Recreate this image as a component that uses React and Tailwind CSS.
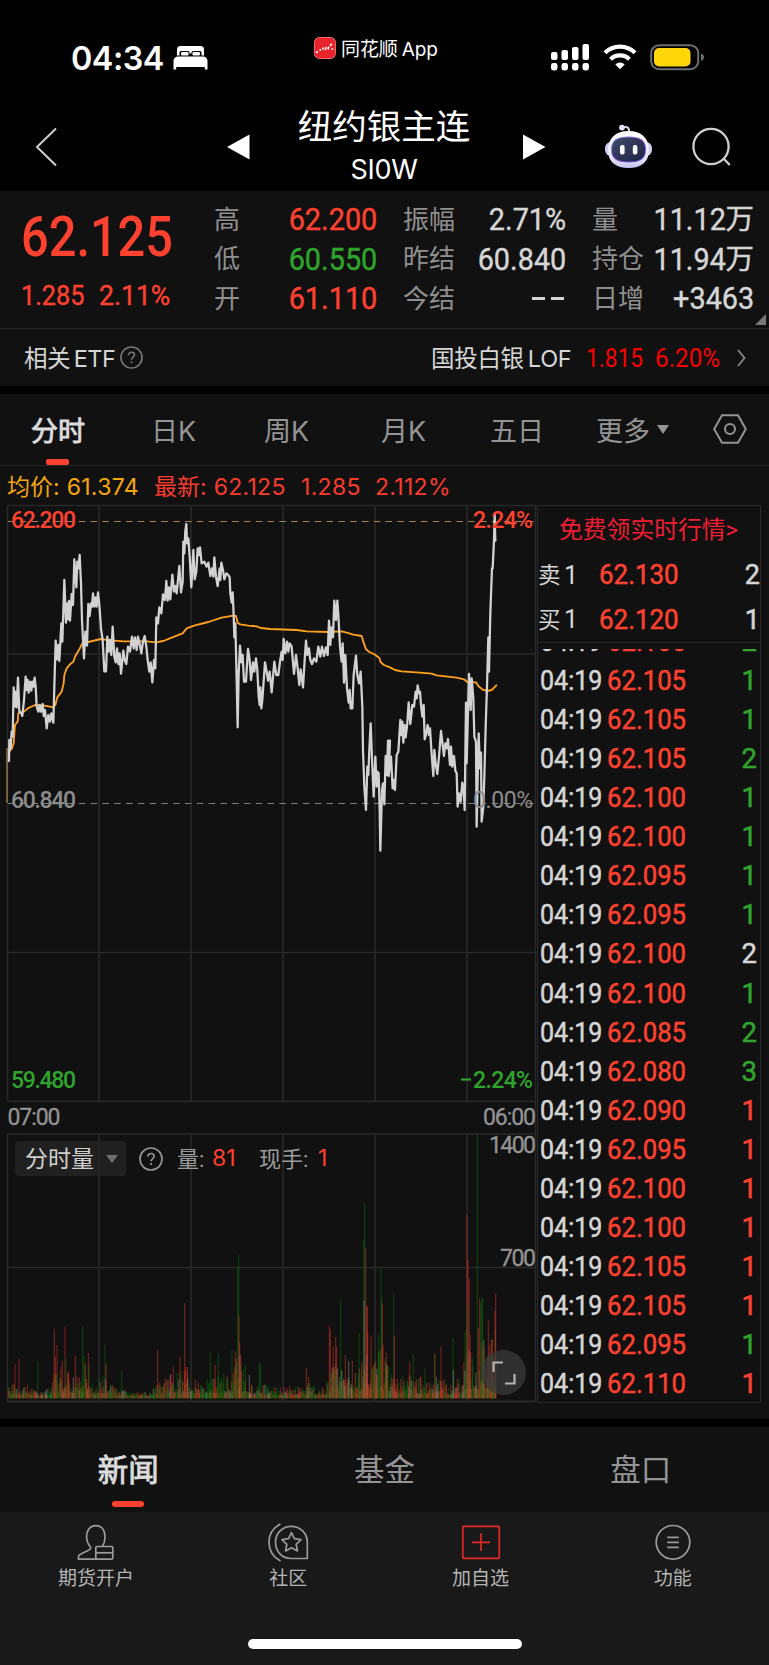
import React from "react";

/* ---------- data ---------- */

const QUOTE = [
  [
    ["高", "62.200", "text-[#ff4130]"],
    ["低", "60.550", "text-[#2fa52d]"],
    ["开", "61.110", "text-[#ff4130]"],
  ],
  [
    ["振幅", "2.71%", "text-[#d6d6d6]"],
    ["昨结", "60.840", "text-[#d6d6d6]"],
    ["今结", "--", "text-[#d6d6d6]"],
  ],
  [
    ["量", "11.12", "text-[#d6d6d6]", "万"],
    ["持仓", "11.94", "text-[#d6d6d6]", "万"],
    ["日增", "+3463", "text-[#d6d6d6]"],
  ],
];

const R = "text-[#ff4130]";
const G = "text-[#2fa52d]";
const W = "text-[#d6d6d6]";

const TICKS = [
  ["62.105", "2", G],
  ["62.105", "1", G],
  ["62.105", "1", G],
  ["62.105", "2", G],
  ["62.100", "1", G],
  ["62.100", "1", G],
  ["62.095", "1", G],
  ["62.095", "1", G],
  ["62.100", "2", W],
  ["62.100", "1", G],
  ["62.085", "2", G],
  ["62.080", "3", G],
  ["62.090", "1", R],
  ["62.095", "1", R],
  ["62.100", "1", R],
  ["62.100", "1", R],
  ["62.105", "1", R],
  ["62.105", "1", R],
  ["62.095", "1", G],
  ["62.110", "1", R],
];

const PRICE =
  "27,783 28,720 32,745 35,695 38,710 41,562 44,620 47,575 50,622 54,533 58,635 64,640 67,648 72,600 77,530 80,570 83,540 86,578 90,545 94,572 97,545 101,560 104,533 107,560 110,620 115,635 119,615 123,635 128,612 131,648 135,630 140,685 145,645 150,665 154,640 160,668 163,560 167,422 171,478 175,435 178,483 184,370 187,425 193,240 198,368 202,310 205,358 207,303 210,362 215,282 219,315 223,178 229,262 232,185 235,205 239,165 243,250 246,360 249,420 252,475 256,395 261,437 265,312 269,348 273,310 276,320 279,280 283,320 287,292 290,320 294,277 298,315 303,385 308,420 313,514 318,514 322,410 326,455 330,420 334,465 338,380 343,470 347,487 351,445 355,492 359,460 363,521 370,452 374,480 379,492 384,440 390,455 396,410 401,445 405,412 410,450 414,410 419,432 424,460 429,425 434,408 439,440 443,480 448,515 452,487 457,547 462,480 466,505 469,352 474,370 478,322 484,340 489,283 495,300 499,243 503,302 507,262 511,298 517,224 522,275 527,258 530,280 538,198 543,277 548,245 550,125 553,160 556,92 559,72 561,130 565,115 569,170 574,262 580,150 584,238 589,215 593,145 597,165 600,142 605,190 613,185 620,200 625,188 631,228 636,205 640,230 643,172 648,230 653,258 659,205 661,240 664,188 669,210 673,238 679,220 685,225 689,232 691,280 695,308 698,277 701,345 703,412 706,370 710,540 713,682 716,520 720,437 724,487 728,465 732,545 738,545 744,447 749,480 753,540 759,487 763,515 768,475 772,510 776,590 779,615 781,562 784,625 787,600 795,487 800,515 804,542 809,515 815,577 823,485 829,525 835,525 840,485 845,455 848,480 851,417 856,460 861,425 865,455 869,430 875,440 882,522 888,465 893,505 898,555 902,508 909,562 914,480 918,422 922,465 927,445 931,480 936,492 942,475 949,485 955,440 961,470 966,440 972,468 978,442 983,465 987,362 991,435 994,382 999,412 1003,302 1008,360 1012,302 1015,345 1020,440 1025,485 1028,430 1032,548 1036,465 1041,565 1046,608 1049,570 1052,625 1057,625 1061,525 1068,467 1072,525 1077,550 1082,515 1087,620 1089,750 1093,860 1098,930 1102,800 1105,825 1108,750 1112,670 1117,800 1121,890 1126,770 1130,860 1132,815 1136,820 1139,930 1141,1052 1146,870 1149,850 1153,913 1157,768 1161,825 1164,722 1170,722 1166,828 1173,770 1178,865 1181,840 1185,870 1190,765 1195,755 1201,660 1204,705 1207,665 1210,728 1214,675 1217,712 1222,670 1226,607 1231,672 1237,615 1242,620 1247,575 1250,595 1253,556 1257,580 1260,575 1263,615 1267,650 1271,615 1274,718 1278,705 1283,675 1287,705 1290,685 1295,762 1300,828 1303,750 1307,790 1312,822 1317,770 1323,693 1328,735 1332,768 1336,730 1340,745 1344,717 1350,795 1353,740 1357,800 1362,768 1366,812 1370,820 1373,920 1377,880 1382,905 1387,848 1391,870 1394,930 1398,608 1400,790 1407,522 1410,560 1412,630 1415,535 1420,595 1423,710 1428,725 1430,980 1436,700 1440,805 1443,758 1445,965 1450,920 1453,830 1457,680 1461,560 1465,412 1467,515 1471,340 1476,205 1478,205 1482,122 1484,44 1486,122";

const AVERAGE =
  "30,752 36,745 41,730 45,675 53,665 55,640 65,636 73,634 83,625 105,615 130,616 160,622 166,615 172,592 185,575 191,550 193,525 200,505 210,493 220,485 225,470 238,448 247,430 265,426 290,420 303,417 330,421 370,424 440,424 468,427 490,423 515,413 548,400 560,385 585,376 625,366 665,353 700,347 708,348 713,368 720,373 745,377 770,379 782,384 810,387 890,390 920,394 985,396 1025,394 1040,398 1060,404 1085,408 1090,425 1098,448 1108,456 1125,464 1138,474 1142,487 1152,495 1170,502 1185,510 1205,514 1260,518 1295,521 1310,526 1370,533 1392,538 1402,546 1428,547 1435,558 1448,569 1462,573 1475,570 1483,562 1489,556";

/* volume peaks: x, height, colour */
const PEAKS = [
  [45, 103, "r"], [57, 119, "r"], [114, 113, "g"], [163, 210, "r"], [166, 125, "r"], [171, 160, "r"],
  [187, 112, "r"], [195, 215, "r"], [198, 120, "g"], [205, 80, "r"], [226, 128, "r"], [248, 218, "g"],
  [252, 128, "g"], [265, 136, "r"], [268, 100, "g"], [315, 160, "g"], [318, 103, "r"], [365, 83, "g"],
  [473, 145, "r"], [520, 95, "r"], [540, 125, "r"], [554, 286, "r"], [557, 94, "r"], [562, 94, "r"],
  [631, 138, "g"], [645, 100, "r"], [655, 133, "g"], [696, 144, "g"], [706, 140, "r"], [713, 390, "g"],
  [716, 432, "g"], [717, 248, "r"], [719, 166, "r"], [722, 132, "r"], [736, 97, "g"], [748, 70, "w"],
  [778, 110, "g"], [782, 102, "g"], [919, 92, "r"], [926, 64, "r"], [988, 218, "r"], [991, 205, "r"],
  [1000, 155, "r"], [1007, 184, "r"], [1010, 155, "r"], [1022, 297, "g"], [1036, 130, "r"], [1046, 112, "w"],
  [1057, 112, "r"], [1077, 196, "g"], [1091, 474, "g"], [1094, 587, "g"], [1097, 450, "r"], [1092, 293, "w"],
  [1100, 280, "r"], [1102, 275, "r"], [1103, 200, "r"], [1113, 186, "r"], [1127, 113, "r"], [1136, 190, "g"],
  [1143, 390, "g"], [1145, 304, "g"], [1147, 285, "r"], [1149, 162, "r"], [1159, 137, "r"], [1162, 100, "g"],
  [1181, 314, "g"], [1183, 188, "r"], [1229, 110, "r"], [1240, 134, "g"], [1275, 90, "g"], [1304, 134, "r"],
  [1305, 130, "g"], [1323, 158, "r"], [1359, 182, "g"], [1360, 85, "w"], [1395, 198, "g"], [1401, 550, "r"],
  [1404, 415, "r"], [1402, 280, "g"], [1408, 360, "r"], [1410, 190, "r"], [1412, 140, "r"], [1432, 792, "g"],
  [1435, 210, "r"], [1439, 300, "r"], [1442, 285, "g"], [1446, 300, "g"], [1448, 300, "g"], [1451, 150, "r"],
  [1465, 236, "r"], [1469, 160, "r"], [1474, 175, "r"], [1481, 130, "g"], [1485, 262, "r"], [1487, 314, "r"],
];

/* typical volume level along the time axis */
const LEVEL = [
  [24, 30], [60, 25], [85, 28], [110, 12], [145, 20], [163, 60], [200, 75], [225, 50], [255, 75], [275, 30],
  [300, 45], [325, 40], [350, 22], [390, 10], [450, 10], [480, 35], [520, 55], [560, 70], [600, 35], [640, 50],
  [690, 50], [716, 110], [735, 50], [760, 30], [800, 30], [840, 20], [880, 25], [930, 35], [960, 15], [985, 40],
  [1000, 80], [1040, 60], [1075, 50], [1095, 150], [1115, 70], [1145, 110], [1170, 60], [1200, 45], [1240, 50],
  [1280, 40], [1310, 50], [1350, 25], [1385, 50], [1403, 130], [1425, 60], [1445, 120], [1470, 130], [1488, 170],
];

function levelAt(x) {
  for (let i = 1; i < LEVEL.length; i++) {
    const [x0, v0] = LEVEL[i - 1];
    const [x1, v1] = LEVEL[i];
    if (x <= x1) return v0 + ((v1 - v0) * (x - x0)) / (x1 - x0);
  }
  return LEVEL[LEVEL.length - 1][1];
}

function volumeBars() {
  let seed = 91;
  const rnd = () => {
    seed = (seed * 1103515245 + 12345) % 2147483648;
    return seed / 2147483648;
  };
  const bars = [];
  for (let x = 25; x < 1489; x += 1.5) {
    const r = rnd();
    const h = 5 + levelAt(x) * (0.2 + 1.2 * r * r);
    const c = rnd();
    bars.push([x, h, c < 0.46 ? "r" : c < 0.9 ? "g" : "w"]);
  }
  return bars.concat(PEAKS);
}

const BARS = volumeBars();
const BAR_COLOR = { r: "#e83a2c", g: "#0b7a0b", w: "#a0a0a0" };

/* ---------- small parts ---------- */

function QuestionMark({ className }) {
  return (
    <svg className={className} viewBox="0 0 24 24" fill="none" stroke="currentColor" strokeWidth="1.7">
      <circle cx="12" cy="12" r="11" />
      <path d="M8.9 9.6c0-1.9 1.3-3.1 3.1-3.1s3.1 1.2 3.1 2.8c0 2.2-3 2.4-3 5" />
      <path d="M12.1 16v1.9" />
    </svg>
  );
}

function StatusBar() {
  return (
    <div className="flex h-[100px] items-start pt-[40px]">
      <div className="flex h-[36px] w-[314px] items-center pl-[71px]">
        <span className="w-[93px] whitespace-nowrap font-['Inter'] text-[33px] leading-[36px] font-semibold tracking-[-0.5px] text-white">
          <span className="inline-block origin-left scale-x-[0.98]">04:34</span>
        </span>
        <svg className="ml-[9px] h-[26px] w-[35px]" viewBox="0 0 35 26" fill="#fff">
          <path d="M4 10.500V4.500A3.500 3.500 0 0 1 7.500 1h20A3.500 3.500 0 0 1 31 4.500v6h-2.500V7.500A1.500 1.500 0 0 0 27 6h-7a1.500 1.500 0 0 0-1.500 1.500v1h-2v-1A1.500 1.500 0 0 0 15 6H8a1.500 1.500 0 0 0-1.500 1.500v3z" />
          <path d="M5 11.500h25a4.500 4.500 0 0 1 4.500 4.500v8.500h-2.700V22H3.200v2.500H.5V16A4.500 4.500 0 0 1 5 11.500z" />
          <rect x="8" y="7" width="7.500" height="3.500" rx="1.200" />
          <rect x="19.500" y="7" width="7.500" height="3.500" rx="1.200" />
        </svg>
      </div>
      <div className="-mt-[3px] flex h-[22px] items-center gap-[5px]">
        <svg className="h-[22px] w-[22px]" viewBox="0 0 22 22">
          <rect x=".5" y=".5" width="21" height="21" rx="5" fill="#e8232b" stroke="#f26a6a" />
          <path
            d="M2 15.500l2-.8M5.500 13.500l1.500-1M8.500 12.500l1-2M11 13l1.500-3M14 12.500l.8-3M16 8.500l2-1.500M17.500 12l1.800.3"
            stroke="#fff"
            strokeWidth="1.600"
            fill="none"
          />
        </svg>
        <span className="mt-[3px] whitespace-nowrap font-['Inter','Noto_Sans_CJK_SC',sans-serif] text-[19px] leading-[22px] tracking-[-0.1px] text-white">
          同花顺<span className="ml-[4px]">App</span>
        </span>
      </div>
      <div className="ml-auto flex items-start pt-[3px] pr-[63px]">
        <svg className="h-[28px] w-[40px]" viewBox="0 0 40 28" fill="#fff">
          <rect x="0" y="9" width="6.500" height="8" rx="2" />
          <rect x="10.500" y="7" width="6.500" height="10" rx="2" />
          <rect x="21" y="4" width="6.500" height="13" rx="2" />
          <rect x="31.500" y="1" width="6.500" height="16" rx="2" />
          <rect x="0" y="20" width="6.500" height="7.500" rx="2.400" />
          <rect x="10.500" y="20" width="6.500" height="7.500" rx="2.400" />
          <rect x="21" y="20" width="6.500" height="7.500" rx="2.400" />
          <rect x="31.500" y="20" width="6.500" height="7.500" rx="2.400" />
        </svg>
        <svg className="ml-[12px] h-[28px] w-[34px]" viewBox="0 0 34 28" fill="none" stroke="#fff" strokeWidth="4.200">
          <path d="M2 9.800a21.500 21.500 0 0 1 30 0" />
          <path d="M7.600 16.300a13.400 13.400 0 0 1 18.800 0" />
          <path d="M17 26.300l-4.700-4.900a6.700 6.700 0 0 1 9.400 0z" fill="#fff" stroke="none" />
        </svg>
        <svg className="ml-[13px] h-[28px] w-[56px]" viewBox="0 0 56 28">
          <rect x="1.200" y="2.200" width="47" height="24" rx="8" fill="none" stroke="#6e6e6e" strokeWidth="2" />
          <rect x="4" y="5" width="36.500" height="18.500" rx="5" fill="#fed60a" />
          <path d="M51 10.500c2.200.8 3 2.300 3 3.700s-.8 2.900-3 3.700z" fill="#6e6e6e" />
        </svg>
      </div>
    </div>
  );
}

function TitleBar() {
  return (
    <div className="flex h-[91px] items-start">
      <svg className="mt-[27px] ml-[35px] h-[40px] w-[23px]" viewBox="0 0 23 40" fill="none" stroke="#cfcfcf" strokeWidth="2">
        <path d="M21 1.500L2 20l19 18.500" />
      </svg>
      <svg className="mt-[34px] ml-[169px] h-[26px] w-[23px]" viewBox="0 0 23 26" fill="#fff">
        <path d="M0 13L22.500 .5v25z" />
      </svg>
      <div className="ml-[35px] flex w-[198px] flex-col items-center pt-[7px] text-white">
        <div className="whitespace-nowrap text-[34.500px] leading-[40px]">纽约银主连</div>
        <div className="mt-[9px] font-['Inter'] text-[27px] leading-[27px]">
          <span className="inline-block tracking-[-0.3px]">SI0W</span>
        </div>
      </div>
      <svg className="mt-[34px] ml-[40px] h-[26px] w-[23px]" viewBox="0 0 23 26" fill="#fff">
        <path d="M22.500 13L0 .5v25z" />
      </svg>
      <svg className="mt-[24px] ml-[58px] h-[45px] w-[50px]" viewBox="0 0 50 45">
        <defs>
          <linearGradient id="shell" x1="0" y1="0" x2="0" y2="1">
            <stop offset="0" stopColor="#ffffff" />
            <stop offset=".75" stopColor="#e6e6fa" />
            <stop offset="1" stopColor="#c4c1ee" />
          </linearGradient>
          <linearGradient id="visor" x1="0" y1="0" x2="1" y2="1">
            <stop offset="0" stopColor="#6fa6e8" />
            <stop offset=".5" stopColor="#9a4fe0" />
            <stop offset="1" stopColor="#4a50d8" />
          </linearGradient>
          <linearGradient id="glass" x1="0" y1="0" x2="1" y2="1">
            <stop offset="0" stopColor="#43496b" />
            <stop offset="1" stopColor="#1c2343" />
          </linearGradient>
        </defs>
        <path d="M17.500 3.800c5-2 8-.5 7.500 4" fill="none" stroke="#e4e4f4" strokeWidth="1.800" />
        <circle cx="18" cy="3.600" r="2.900" fill="#e2e2f6" />
        <rect x="1" y="18" width="47" height="14" rx="6" fill="#cfcdf0" />
        <path d="M24.500 7C37 7 45 14 45 26S37 44 24.500 44 4 38 4 26 12 7 24.500 7z" fill="url(#shell)" />
        <path d="M24.500 12.500c11 0 17.500 3 17.500 13s-6.500 13-17.500 13S7 35.500 7 25.500s6.500-13 17.500-13z" fill="url(#visor)" />
        <path d="M24.500 13.500c10.500 0 16.500 2.500 16.500 12s-6 12-16.500 12S8 35 8 25.500s6-12 16.500-12z" fill="url(#glass)" />
        <rect x="16" y="21" width="4.600" height="9.500" rx="2" fill="#fff" />
        <rect x="28.800" y="21" width="4.600" height="9.500" rx="2" fill="#fff" />
      </svg>
      <svg className="mt-[27px] ml-[38px] h-[40px] w-[41px]" viewBox="0 0 41 40" fill="none" stroke="#cfcfcf" strokeWidth="2.300">
        <circle cx="19" cy="19.500" r="17.600" />
        <path d="M31.500 31.500l6.300 6.500" />
      </svg>
    </div>
  );
}

function Quote() {
  return (
    <div className="flex h-[138px] border-b border-[#262626]">
      <div className="w-[214px] shrink-0 pl-[21px] text-[#ff4130]">
        <div className="h-[90px] origin-left scale-x-[0.87] pt-[1px] text-[56px] leading-[90px] font-medium">62.125</div>
        <div className="flex pt-[1px] text-[28px] leading-[28px] whitespace-nowrap [-webkit-text-stroke:0.4px]">
          <span className="inline-block w-[78px] origin-left scale-x-[0.9]">1.285</span>
          <span className="inline-block origin-left scale-x-[0.95]">2.11%</span>
        </div>
      </div>
      <div className="flex gap-[26px] pt-[9px]">
        {QUOTE.map((col, i) => (
          <div key={i} className={i === 2 ? "w-[162px]" : "w-[163px]"}>
            {col.map(([label, value, color, unit]) => (
              <div key={label} className="flex h-[39.500px] items-center justify-between">
                <span className="mt-[1px] text-[26px] leading-[39px] text-[#8f8f8f]">{label}</span>
                <span className={"flex items-center text-[31px] leading-[39px] whitespace-nowrap [-webkit-text-stroke:0.4px] " + color}>
                  {value === "--" ? (
                    <span className="mr-[2px] flex gap-[6px]">
                      <i className="block h-[3px] w-[13px] bg-[#d6d6d6]" />
                      <i className="block h-[3px] w-[13px] bg-[#d6d6d6]" />
                    </span>
                  ) : (
                    <span className="-ml-4 inline-block origin-right scale-x-[0.93]">{value}</span>
                  )}
                  {unit && <span className="text-[28.500px]">{unit}</span>}
                </span>
              </div>
            ))}
          </div>
        ))}
      </div>
      <svg className="mt-[123px] ml-[1px] h-[11px] w-[11px]" viewBox="0 0 11 11" fill="#777">
        <path d="M11 0v11H0z" />
      </svg>
    </div>
  );
}

function RelatedFund() {
  return (
    <div className="flex h-[57px] items-center pr-[23px] pl-[24px] text-[23.500px] leading-[30px] text-[#d6d6d6]">
      <span className="mt-[2px] inline-block w-[96px] whitespace-nowrap font-['Inter','Noto_Sans_CJK_SC',sans-serif] tracking-[-0.6px]">
        相关<span className="ml-[4px]">ETF</span>
      </span>
      <QuestionMark className="h-[23px] w-[23px] text-[#777]" />
      <span className="mt-[2px] ml-auto w-[155px] whitespace-nowrap font-['Inter','Noto_Sans_CJK_SC',sans-serif] tracking-[-0.3px]">
        国投白银<span className="ml-[4px]">LOF</span>
      </span>
      <span className="mt-[2px] flex w-[151px] text-[25px] whitespace-nowrap text-[#fa0000]">
        <span className="inline-block w-[69px] origin-left scale-x-[0.91]">1.815</span>
        <span className="inline-block origin-left scale-x-[0.97]">6.20%</span>
      </span>
      <svg className="h-[18px] w-[9px]" viewBox="0 0 9 18" fill="none" stroke="#8a8a8a" strokeWidth="1.800">
        <path d="M1 1l6.500 8L1 17" />
      </svg>
    </div>
  );
}

function PeriodTabs() {
  return (
    <div className="flex h-[72px] items-center border-b border-[#262626] font-['Inter','Noto_Sans_CJK_SC',sans-serif] text-[27px] leading-[40px] whitespace-nowrap text-[#949494]">
      <div className="relative flex h-full w-[116px] items-center justify-center text-[#dcdcdc] [-webkit-text-stroke:0.9px]">
        <span className="mt-[4px]">分时</span>
        <span className="absolute bottom-0 left-[46px] h-[6px] w-[23px] rounded-[2px] bg-[#ff4130]" />
      </div>
      <div className="mt-[4px] w-[116px] pl-[35px]">日K</div>
      <div className="mt-[4px] w-[116px] pl-[32px]">周K</div>
      <div className="mt-[4px] w-[116px] pl-[33px]">月K</div>
      <div className="mt-[4px] w-[132px] pl-[26px]">五日</div>
      <div className="mt-[4px] flex w-[117px] items-center gap-[7px]">
        更多
        <svg className="-mt-[4px] h-[9px] w-[12px]" viewBox="0 0 12 9" fill="#949494">
          <path d="M0 0h12L6 9z" />
        </svg>
      </div>
      <svg className="-mt-[1px] h-[30px] w-[34px]" viewBox="0 0 34 30" fill="none" stroke="#949494" strokeWidth="2">
        <path d="M9 1.200h16L32.800 15 25 28.800H9L1.200 15z" />
        <circle cx="17" cy="15" r="5" />
      </svg>
    </div>
  );
}

function PriceInfo() {
  return (
    <div className="flex h-[38px] items-center pt-[3px] pl-[7px] font-['Inter','Noto_Sans_CJK_SC',sans-serif] text-[23px] leading-[38px] whitespace-nowrap text-[#fa3c2d]">
      <span className="w-[147px] text-[#f5a60a]">
        均价:<span className="ml-[7px] tracking-[0.3px]">61.374</span>
      </span>
      <span className="w-[147px]">
        最新:<span className="ml-[7px] tracking-[0.3px]">62.125</span>
      </span>
      <span className="w-[74px] tracking-[0.3px]">1.285</span>
      <span className="tracking-[0.3px]">2.112%</span>
    </div>
  );
}

const LABEL = { fontFamily: "Roboto", fontSize: 23, lengthAdjust: "spacingAndGlyphs" };

function Charts() {
  return (
    <svg className="block h-[900px] w-[538px]" viewBox="0 504 538 900">
      <g stroke="#282828" fill="none">
        {[99, 191, 283, 375, 467].map((x) => (
          <path key={x} d={`M${x} 505V1101M${x} 1134V1401`} strokeWidth="1.600" />
        ))}
        <path d="M8 654H535M8 952.500H535M8 1267.500H535" strokeWidth="1.500" />
        <path d="M7.500 505.500H536M7.500 1101.200H536M7.500 1134H536" strokeWidth="1.500" />
        <path d="M7.500 505V1101M7.500 1134V1402" strokeWidth="1.500" />
        <path d="M7 1401.500H536" strokeWidth="2" />
        <path d="M535.500 505V1402" strokeWidth="1.500" />
      </g>
      <path d="M8 521.500H535" stroke="#a58452" strokeWidth="1.200" strokeDasharray="6.500 5.300" />
      <path d="M8 803.500H535" stroke="#808080" strokeWidth="1.200" strokeDasharray="6.500 5.300" />
      <path d="M7 748V803" stroke="#b08d57" strokeWidth="1.200" />
      <g transform="translate(0 500) scale(.33333)" fill="none" strokeLinejoin="round" strokeLinecap="round">
        <polyline points={AVERAGE} stroke="#ffa01e" strokeWidth="5.500" />
        <polyline points={PRICE} stroke="#d2d2d2" strokeWidth="6.800" />
      </g>
      <g transform="translate(0 1060) scale(.33333)" fillOpacity="0.45">
        {BARS.map(([x, h, c], i) => (
          <rect key={i} x={x - 1.7} y={1015 - h} width="3.400" height={h} fill={BAR_COLOR[c]} />
        ))}
      </g>
      <g {...LABEL}>
        <text x="11" y="527.500" textLength="65" fill="#ff4130" fontWeight="500">62.200</text>
        <text x="11" y="807.500" textLength="65" fill="#8c8c8c" fontWeight="500">60.840</text>
        <text x="11" y="1087.500" textLength="65" fill="#2fa52d" fontWeight="500">59.480</text>
        <text x="473" y="527.500" textLength="60" fill="#ff4130" fontWeight="500">2.24%</text>
        <text x="473" y="807.500" textLength="60" fill="#8c8c8c">0.00%</text>
        <text x="473" y="1087.500" textLength="60" fill="#2fa52d" fontWeight="500">2.24%</text>
        <path d="M461 1079.500h10" stroke="#2fa52d" strokeWidth="2.200" />
        <g fill="#949494" stroke="#949494" strokeWidth=".3">
          <text x="7.500" y="1125" textLength="53">07:00</text>
          <text x="483" y="1125" textLength="53">06:00</text>
          <text x="489" y="1153" textLength="47">1400</text>
          <text x="500" y="1266" textLength="36">700</text>
        </g>
      </g>
    </svg>
  );
}

function VolumeHeader() {
  return (
    <div className="absolute top-[637px] left-[15px] flex h-[35px] items-center text-[22px] leading-[35px] whitespace-nowrap text-[#9c9c9c]">
      <div className="flex h-[35px] w-[111px] items-center gap-[12px] rounded-[4px] bg-[#222222]/90 pl-[10px] text-[23px] text-[#d0d0d0]">
        <span className="mt-[2px]">分时量</span>
        <svg className="h-[8px] w-[12px]" viewBox="0 0 12 8" fill="#6f6f6f">
          <path d="M0 0h12L6 8z" />
        </svg>
      </div>
      <QuestionMark className="ml-[13px] h-[24px] w-[24px] text-[#949494]" />
      <span className="mt-[1px] ml-[14px] w-[35px]">量:</span>
      <span className="w-[47px] font-['Inter'] text-[23px] text-[#ff4130]">81</span>
      <span className="mt-[1px] w-[59px]">现手:</span>
      <span className="font-['Inter'] text-[23px] text-[#ff4130]">1</span>
    </div>
  );
}

function OrderRow({ side, price, qty }) {
  return (
    <div className="flex h-[44.500px] items-center whitespace-nowrap text-[#d6d6d6]">
      <span className="w-[26px] text-[22.500px] leading-[44px]">{side}</span>
      <span className="w-[35px] text-[25px]">1</span>
      <span className="text-[27px] text-[#ff4130] [-webkit-text-stroke:0.5px]">
        <span className="inline-block origin-left scale-x-[0.96]">{price}</span>
      </span>
      <span className="ml-auto text-[27px] [-webkit-text-stroke:0.5px]">{qty}</span>
    </div>
  );
}

function TradePanel() {
  return (
    <div className="flex h-[898px] w-[224px] flex-col border border-[#2a2a2a]">
      <div className="h-[47px] pt-[1.500px] pl-[21px] text-[23.800px] leading-[45px] whitespace-nowrap text-[#f01e32]">
        免费领实时行情&gt;
      </div>
      <OrderRow side="卖" price="62.130" qty="2" />
      <OrderRow side="买" price="62.120" qty="1" />
      <div className="h-[7px] border-t border-[#2a2a2a]" />
      <div className="flex min-h-0 flex-1 flex-col justify-end overflow-hidden">
        {TICKS.map(([price, qty, color], i) => (
          <div
            key={i}
            className="relative top-[1.500px] flex h-[39.100px] shrink-0 items-center pr-[3px] pl-[2px] text-[27.500px] leading-[39px] whitespace-nowrap [-webkit-text-stroke:0.5px]"
          >
            <span className="w-[67px] text-[#d6d6d6]">
              <span className="inline-block origin-left scale-x-[0.91]">04:19</span>
            </span>
            <span className="w-[80px] text-[#ff4130]">
              <span className="inline-block origin-left scale-x-[0.935]">{price}</span>
            </span>
            <span className={"ml-auto " + color}>{qty}</span>
          </div>
        ))}
      </div>
    </div>
  );
}

function SectionTabs() {
  return (
    <div className="grid h-[85px] grid-cols-3 pt-[2px] text-[30.500px] leading-[83px] text-[#949494]">
      <div className="relative text-center text-[#dcdcdc] [-webkit-text-stroke:0.9px]">
        新闻
        <span className="absolute bottom-[5px] left-1/2 h-[6px] w-[32px] -translate-x-1/2 rounded-[3px] bg-[#ff4130]" />
      </div>
      <div className="text-center">基金</div>
      <div className="text-center">盘口</div>
    </div>
  );
}

function NavItem({ label, children }) {
  return (
    <div className="flex flex-col items-center pt-[11px]">
      <svg className="h-[40px] w-[44px]" viewBox="0 0 44 40" fill="none" stroke="#9a9a9a" strokeWidth="1.700" strokeLinejoin="round">
        {children}
      </svg>
      <span className="mt-[1.500px] text-[19px] leading-[28px] text-[#b4b4b4]">{label}</span>
    </div>
  );
}

function BottomNav() {
  return (
    <div className="flex h-[153px] flex-col bg-[#191919]">
      <div className="grid h-[80px] grid-cols-4">
        <NavItem label="期货开户">
          <path d="M23 36.200H4.500v-2.700c0-1.200 1-1.700 2.500-2.400l8-4.200c2-1.100 2.200-2 1.200-3.200-2.300-2.800-3.600-5.500-3.600-9.700 0-7 3.400-11.300 9.200-11.300s9.200 4.300 9.200 11.300c0 4-.8 6.800-2.600 9.500" />
          <rect x="21.800" y="23.500" width="17" height="12.700" rx="1.200" />
          <path d="M21.800 29.800h17" />
        </NavItem>
        <NavItem label="社区">
          <path d="M41.300 35.500H25.500C16 35.500 9.500 28.500 9.500 19.300S16.500 3.300 25.300 3.300s16 7 16 16z" />
          <path d="M14.500 1C7.500 4.500 3 11 3 19.300S7.500 34.300 14.500 38" />
          <path d="M25.500 9.600l2.900 6.100 6.600.9-4.800 4.700 1.200 6.700-5.900-3.200-5.900 3.200 1.200-6.700-4.800-4.700 6.600-.9z" />
        </NavItem>
        <NavItem label="加自选">
          <g stroke="#e22a2a">
            <rect x="3.800" y="3.300" width="36.500" height="32" rx="1" />
            <path d="M22 10.500v17.500M13 19.300h18" />
          </g>
        </NavItem>
        <NavItem label="功能">
          <circle cx="22" cy="19.300" r="16.800" />
          <path d="M16.200 14.300h11.600M16.200 19.300h11.600M16.200 24.300h11.600" />
        </NavItem>
      </div>
      <div className="mx-auto mt-[47px] h-[10px] w-[274px] rounded-full bg-white" />
    </div>
  );
}

export default function App() {
  return (
    <div className="h-[1665px] w-[769px] overflow-hidden bg-[#111111] font-['Roboto','Noto_Sans_CJK_SC',sans-serif]">
      <div className="h-[191px] bg-black">
        <StatusBar />
        <TitleBar />
      </div>
      <Quote />
      <RelatedFund />
      <div className="h-[8px] bg-black" />
      <PeriodTabs />
      <PriceInfo />
      <div className="relative flex h-[915px] items-start">
        <Charts />
        <div className="-ml-[1px] pt-[1px]">
          <TradePanel />
        </div>
        <VolumeHeader />
        <div className="absolute top-[846px] left-[481px] flex h-[45px] w-[45px] items-center justify-center rounded-full bg-[#3a3a3a]/75">
          <svg className="h-[24px] w-[24px]" viewBox="0 0 24 24" fill="none" stroke="#b4b4b4" strokeWidth="2.200">
            <path d="M1.500 11V1.500H11M22.500 13v9.500H13" />
          </svg>
        </div>
      </div>
      <div className="h-[8px] bg-black" />
      <SectionTabs />
      <BottomNav />
    </div>
  );
}
